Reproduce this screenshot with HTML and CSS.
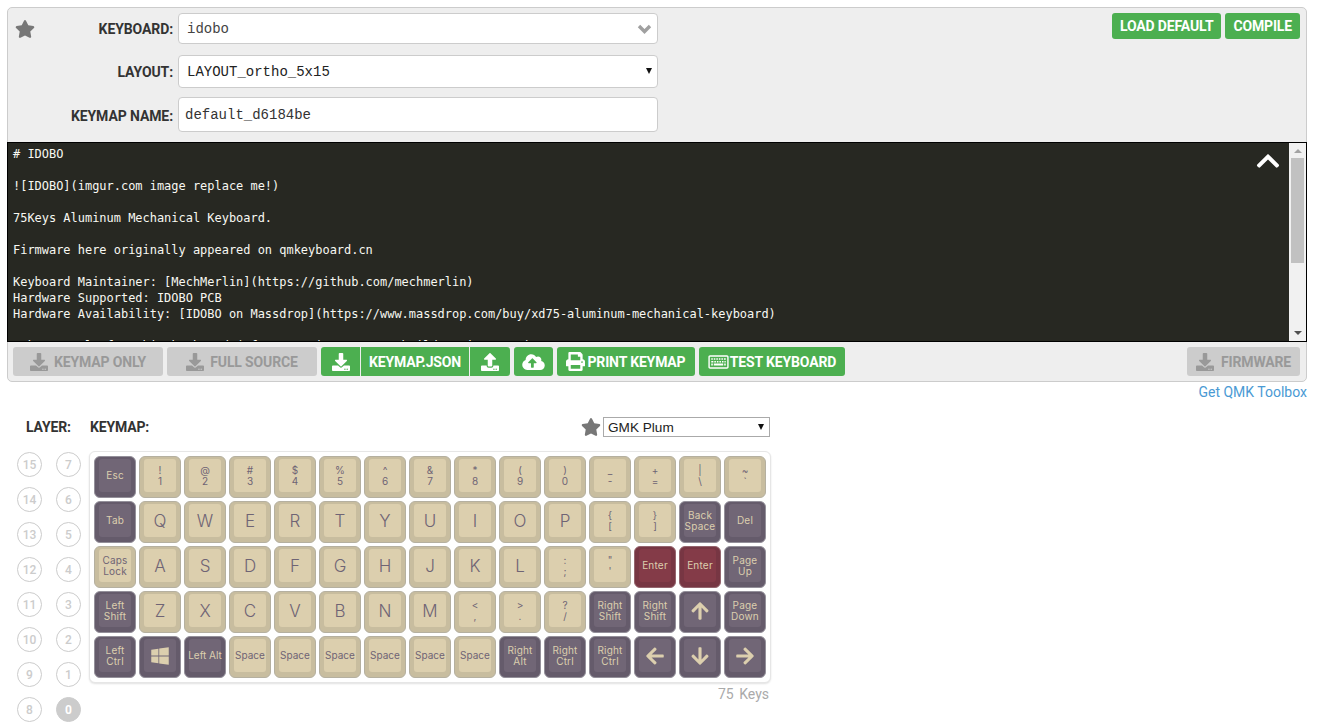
FILE: index.html
```html
<!DOCTYPE html>
<html lang="en">
<head>
    <meta charset="UTF-8">
    <meta name="viewport" content="width=device-width, initial-scale=1.0">
    <title>QMK Configurator</title>
    <link rel="stylesheet" href="styles.css">
</head>
<body>
    <svg class="sprites" xmlns="http://www.w3.org/2000/svg">
        <symbol id="i-star" viewBox="0 0 576 512"><path d="M259.3 17.8L194 150.2 47.9 171.5c-26.2 3.8-36.7 36.1-17.7 54.6l105.7 103-25 145.5c-4.5 26.3 23.2 46 46.4 33.7L288 439.6l130.7 68.7c23.2 12.2 50.9-7.4 46.4-33.7l-25-145.5 105.7-103c19-18.5 8.5-50.8-17.7-54.6L382 150.2 316.7 17.8c-11.7-23.6-45.6-23.9-57.4 0z"/></symbol>
        <symbol id="i-download" viewBox="0 0 512 512"><path d="M216 0h80c13.3 0 24 10.7 24 24v168h87.7c17.8 0 26.7 21.5 14.1 34.1L269.7 378.3c-7.5 7.5-19.8 7.5-27.3 0L90.1 226.1c-12.6-12.6-3.7-34.1 14.1-34.1H192V24c0-13.3 10.7-24 24-24zm296 376v112c0 13.3-10.7 24-24 24H24c-13.3 0-24-10.7-24-24V376c0-13.3 10.7-24 24-24h146.7l49 49c20.1 20.1 52.5 20.1 72.6 0l49-49H488c13.3 0 24 10.7 24 24zm-124 88c0-11-9-20-20-20s-20 9-20 20 9 20 20 20 20-9 20-20zm64 0c0-11-9-20-20-20s-20 9-20 20 9 20 20 20 20-9 20-20z"/></symbol>
        <symbol id="i-upload" viewBox="0 0 512 512"><path d="M296 384h-80c-13.3 0-24-10.7-24-24V192h-87.7c-17.8 0-26.7-21.5-14.1-34.1L242.3 5.7c7.5-7.5 19.8-7.5 27.3 0l152.2 152.2c12.6 12.6 3.7 34.1-14.1 34.1H320v168c0 13.3-10.7 24-24 24zm216-8v112c0 13.3-10.7 24-24 24H24c-13.3 0-24-10.7-24-24V376c0-13.3 10.7-24 24-24h136v8c0 30.9 25.1 56 56 56h80c30.9 0 56-25.1 56-56v-8h136c13.3 0 24 10.7 24 24zm-124 88c0-11-9-20-20-20s-20 9-20 20 9 20 20 20 20-9 20-20zm64 0c0-11-9-20-20-20s-20 9-20 20 9 20 20 20 20-9 20-20z"/></symbol>
        <symbol id="i-cloud" viewBox="0 0 640 512"><path d="M537.6 226.6c4.1-10.7 6.4-22.4 6.4-34.6 0-53-43-96-96-96-19.7 0-38.1 6-53.3 16.2C367 64.2 315.3 32 256 32c-88.4 0-160 71.6-160 160 0 2.7.1 5.4.2 8.1C40.2 219.8 0 273.2 0 336c0 79.5 64.5 144 144 144h368c70.7 0 128-57.3 128-128 0-61.9-44-113.6-102.4-125.4zM393.4 288H328v112c0 8.8-7.2 16-16 16h-48c-8.8 0-16-7.2-16-16V288h-65.4c-14.3 0-21.4-17.2-11.3-27.3l105.4-105.4c6.2-6.2 16.4-6.2 22.6 0l105.4 105.4c10.1 10.1 2.9 27.3-11.3 27.3z"/></symbol>
        <symbol id="i-print" viewBox="0 0 512 512"><path d="M448 192V77.25c0-8.49-3.37-16.62-9.37-22.63L393.37 9.37c-6-6-14.14-9.37-22.63-9.37H96C78.33 0 64 14.33 64 32v160c-35.35 0-64 28.65-64 64v112c0 8.84 7.16 16 16 16h48v96c0 17.67 14.33 32 32 32h320c17.67 0 32-14.33 32-32v-96h48c8.84 0 16-7.16 16-16V256c0-35.35-28.65-64-64-64zm-64 256H128v-96h256v96zm0-224H128V64h192v48c0 8.84 7.16 16 16 16h48v96zm48 72c-13.25 0-24-10.75-24-24 0-13.26 10.75-24 24-24s24 10.74 24 24c0 13.25-10.75 24-24 24z"/></symbol>
        <symbol id="i-keyboard" viewBox="0 0 576 512"><path fill-rule="evenodd" d="M528 64H48C21.5 64 0 85.5 0 112v288c0 26.5 21.5 48 48 48h480c26.5 0 48-21.5 48-48V112c0-26.5-21.5-48-48-48zm8 336c0 4.4-3.6 8-8 8H48c-4.4 0-8-3.6-8-8V112c0-4.4 3.6-8 8-8h480c4.4 0 8 3.6 8 8z"/><path d="M82 150h44v44H82zM154 150h44v44h-44zM226 150h44v44h-44zM298 150h44v44h-44zM370 150h44v44h-44zM442 150h52v44h-52zM82 226h60v44H82zM170 226h44v44h-44zM242 226h44v44h-44zM314 226h44v44h-44zM386 226h44v44h-44zM458 226h36v44h-36zM82 302h44v52H82zM154 302h268v52H154zM450 302h44v52h-44z"/></symbol>
        <symbol id="i-up" viewBox="0 0 448 512"><path d="M34.9 289.5l-22.2-22.2c-9.4-9.4-9.4-24.6 0-33.9L207 39c9.4-9.4 24.6-9.4 33.9 0l194.3 194.3c9.4 9.4 9.4 24.6 0 33.9L413 289.4c-9.5 9.5-25 9.3-34.3-.4L264 168.6V456c0 13.3-10.7 24-24 24h-32c-13.3 0-24-10.7-24-24V168.6L69.2 289.1c-9.3 9.8-24.8 10-34.3.4z"/></symbol>
        <symbol id="i-down" viewBox="0 0 448 512"><path d="M413.1 222.5l22.2 22.2c9.4 9.4 9.4 24.6 0 33.9L241 473c-9.4 9.4-24.6 9.4-33.9 0L12.7 278.6c-9.4-9.4-9.4-24.6 0-33.9l22.2-22.2c9.5-9.5 25-9.3 34.3.4L184 343.4V56c0-13.3 10.7-24 24-24h32c13.3 0 24 10.7 24 24v287.4l114.8-120.5c9.3-9.8 24.8-10 34.3-.4z"/></symbol>
        <symbol id="i-left" viewBox="0 0 448 512"><path d="M257.5 445.1l-22.2 22.2c-9.4 9.4-24.6 9.4-33.9 0L7 273c-9.4-9.4-9.4-24.6 0-33.9L201.4 44.7c9.4-9.4 24.6-9.4 33.9 0l22.2 22.2c9.5 9.5 9.3 25-.4 34.3L136.6 216H424c13.3 0 24 10.7 24 24v32c0 13.3-10.7 24-24 24H136.6l120.5 114.8c9.8 9.3 10 24.8.4 34.3z"/></symbol>
        <symbol id="i-right" viewBox="0 0 448 512"><path d="M190.5 66.9l22.2-22.2c9.4-9.4 24.6-9.4 33.9 0L441 239c9.4 9.4 9.4 24.6 0 33.9L246.6 467.3c-9.4 9.4-24.6 9.4-33.9 0l-22.2-22.2c-9.5-9.5-9.3-25 .4-34.3L311.4 296H24c-13.3 0-24-10.7-24-24v-32c0-13.3 10.7-24 24-24h287.4L190.9 101.2c-9.8-9.3-10-24.8-.4-34.3z"/></symbol>
        <symbol id="i-windows" viewBox="0 0 448 512"><path d="M0 93.7l183.6-25.3v177.4H0V93.7zm0 324.6l183.6 25.3V268.4H0v149.9zm203.8 28L448 480V268.4H203.8v177.9zm0-380.6v180.1H448V32L203.8 65.7z"/></symbol>
        <symbol id="i-chev-up" viewBox="0 0 448 512"><path d="M240.971 130.524l194.343 194.343c9.373 9.373 9.373 24.569 0 33.941l-22.667 22.667c-9.357 9.357-24.522 9.375-33.901.04L224 227.495 69.255 381.516c-9.379 9.335-24.544 9.317-33.901-.04l-22.667-22.667c-9.373-9.373-9.373-24.569 0-33.941L207.03 130.525c9.372-9.373 24.568-9.373 33.941-.001z"/></symbol>
    </svg>

    <div class="page">
        <section class="panel">
            <div class="top-bar">
                <svg class="fav-star"><use href="#i-star"/></svg>
                <div class="form-grid">
                    <label class="field-label">KEYBOARD:</label>
                    <div class="field field-keyboard">
                        <span>idobo</span>
                        <svg class="chev" viewBox="0 0 15 10"><polyline points="2,2 7.5,7.5 13,2"/></svg>
                    </div>
                    <label class="field-label label-layout" for="layout">LAYOUT:</label>
                    <div class="select-wrap select-layout">
                        <select class="field field-layout" id="layout">
                            <option>LAYOUT_ortho_5x15</option>
                        </select>
                    </div>
                    <label class="field-label label-name" for="keymap-name">KEYMAP NAME:</label>
                    <input class="field field-name" id="keymap-name" type="text" value="default_d6184be">
                </div>
                <div class="top-actions">
                    <button class="btn btn-top">LOAD DEFAULT</button>
                    <button class="btn btn-top">COMPILE</button>
                </div>
            </div>

            <div class="editor">
                <pre class="editor-text"># IDOBO

![IDOBO](imgur.com image replace me!)

75Keys Aluminum Mechanical Keyboard.

Firmware here originally appeared on qmkeyboard.cn

Keyboard Maintainer: [MechMerlin](https://github.com/mechmerlin)
Hardware Supported: IDOBO PCB
Hardware Availability: [IDOBO on Massdrop](https://www.massdrop.com/buy/xd75-aluminum-mechanical-keyboard)

Make example for this keyboard (after setting up your build environment):</pre>
                <svg class="collapse"><use href="#i-chev-up"/></svg>
                <div class="scrollbar">
                    <span class="arrow-up"></span>
                    <span class="thumb"></span>
                    <span class="arrow-down"></span>
                </div>
            </div>

            <div class="action-bar">
                <button class="btn btn-off btn-wide"><svg class="ico"><use href="#i-download"/></svg>KEYMAP ONLY</button>
                <button class="btn btn-off btn-wide"><svg class="ico"><use href="#i-download"/></svg>FULL SOURCE</button>
                <div class="btn-group">
                    <button class="btn btn-icon"><svg class="ico"><use href="#i-download"/></svg></button>
                    <button class="btn btn-json">KEYMAP.JSON</button>
                    <button class="btn btn-icon"><svg class="ico"><use href="#i-upload"/></svg></button>
                </div>
                <button class="btn btn-cloud"><svg class="ico ico-cloud"><use href="#i-cloud"/></svg></button>
                <button class="btn btn-print"><svg class="ico ico-print"><use href="#i-print"/></svg>PRINT KEYMAP</button>
                <button class="btn btn-test"><svg class="ico ico-kb"><use href="#i-keyboard"/></svg>TEST KEYBOARD</button>
                <button class="btn btn-off btn-firmware"><svg class="ico"><use href="#i-download"/></svg>FIRMWARE</button>
            </div>
        </section>

        <div class="toolbox-row"><a href="#">Get QMK Toolbox</a></div>

        <section class="workspace">
            <div class="layers">
                <div class="section-label layer-label">LAYER:</div>
                <div class="layer-grid">
                    <span class="layer">15</span><span class="layer">7</span>
                    <span class="layer">14</span><span class="layer">6</span>
                    <span class="layer">13</span><span class="layer">5</span>
                    <span class="layer">12</span><span class="layer">4</span>
                    <span class="layer">11</span><span class="layer">3</span>
                    <span class="layer">10</span><span class="layer">2</span>
                    <span class="layer">9</span><span class="layer">1</span>
                    <span class="layer">8</span><span class="layer layer-active">0</span>
                </div>
            </div>

            <div class="keymap">
                <div class="keymap-head">
                    <div class="section-label">KEYMAP:</div>
                    <div class="colorway">
                        <svg class="colorway-star"><use href="#i-star"/></svg>
                        <div class="select-wrap select-colorway">
                            <select class="colorway-select"><option>GMK Plum</option></select>
                        </div>
                    </div>
                </div>

                <div class="board">
                    <!-- row 1 -->
                    <div class="key dark"><div class="cap cap-sm">Esc</div></div>
                    <div class="key"><div class="cap cap-two">!<br>1</div></div>
                    <div class="key"><div class="cap cap-two">@<br>2</div></div>
                    <div class="key"><div class="cap cap-two">#<br>3</div></div>
                    <div class="key"><div class="cap cap-two">$<br>4</div></div>
                    <div class="key"><div class="cap cap-two">%<br>5</div></div>
                    <div class="key"><div class="cap cap-two">^<br>6</div></div>
                    <div class="key"><div class="cap cap-two">&amp;<br>7</div></div>
                    <div class="key"><div class="cap cap-two">*<br>8</div></div>
                    <div class="key"><div class="cap cap-two">(<br>9</div></div>
                    <div class="key"><div class="cap cap-two">)<br>0</div></div>
                    <div class="key"><div class="cap cap-two">_<br>-</div></div>
                    <div class="key"><div class="cap cap-two">+<br>=</div></div>
                    <div class="key"><div class="cap cap-two">|<br>\</div></div>
                    <div class="key"><div class="cap cap-two">~<br>`</div></div>
                    <!-- row 2 -->
                    <div class="key dark"><div class="cap cap-sm">Tab</div></div>
                    <div class="key"><div class="cap cap-lg">Q</div></div>
                    <div class="key"><div class="cap cap-lg">W</div></div>
                    <div class="key"><div class="cap cap-lg">E</div></div>
                    <div class="key"><div class="cap cap-lg">R</div></div>
                    <div class="key"><div class="cap cap-lg">T</div></div>
                    <div class="key"><div class="cap cap-lg">Y</div></div>
                    <div class="key"><div class="cap cap-lg">U</div></div>
                    <div class="key"><div class="cap cap-lg">I</div></div>
                    <div class="key"><div class="cap cap-lg">O</div></div>
                    <div class="key"><div class="cap cap-lg">P</div></div>
                    <div class="key"><div class="cap cap-two">{<br>[</div></div>
                    <div class="key"><div class="cap cap-two">}<br>]</div></div>
                    <div class="key dark"><div class="cap cap-sm">Back<br>Space</div></div>
                    <div class="key dark"><div class="cap cap-sm">Del</div></div>
                    <!-- row 3 -->
                    <div class="key"><div class="cap cap-sm">Caps<br>Lock</div></div>
                    <div class="key"><div class="cap cap-lg">A</div></div>
                    <div class="key"><div class="cap cap-lg">S</div></div>
                    <div class="key"><div class="cap cap-lg">D</div></div>
                    <div class="key"><div class="cap cap-lg">F</div></div>
                    <div class="key"><div class="cap cap-lg">G</div></div>
                    <div class="key"><div class="cap cap-lg">H</div></div>
                    <div class="key"><div class="cap cap-lg">J</div></div>
                    <div class="key"><div class="cap cap-lg">K</div></div>
                    <div class="key"><div class="cap cap-lg">L</div></div>
                    <div class="key"><div class="cap cap-two">:<br>;</div></div>
                    <div class="key"><div class="cap cap-two">"<br>'</div></div>
                    <div class="key red"><div class="cap cap-sm">Enter</div></div>
                    <div class="key red"><div class="cap cap-sm">Enter</div></div>
                    <div class="key dark"><div class="cap cap-sm">Page<br>Up</div></div>
                    <!-- row 4 -->
                    <div class="key dark"><div class="cap cap-sm">Left<br>Shift</div></div>
                    <div class="key"><div class="cap cap-lg">Z</div></div>
                    <div class="key"><div class="cap cap-lg">X</div></div>
                    <div class="key"><div class="cap cap-lg">C</div></div>
                    <div class="key"><div class="cap cap-lg">V</div></div>
                    <div class="key"><div class="cap cap-lg">B</div></div>
                    <div class="key"><div class="cap cap-lg">N</div></div>
                    <div class="key"><div class="cap cap-lg">M</div></div>
                    <div class="key"><div class="cap cap-two">&lt;<br>,</div></div>
                    <div class="key"><div class="cap cap-two">&gt;<br>.</div></div>
                    <div class="key"><div class="cap cap-two">?<br>/</div></div>
                    <div class="key dark"><div class="cap cap-sm">Right<br>Shift</div></div>
                    <div class="key dark"><div class="cap cap-sm">Right<br>Shift</div></div>
                    <div class="key dark"><div class="cap"><svg class="arrow"><use href="#i-up"/></svg></div></div>
                    <div class="key dark"><div class="cap cap-sm">Page<br>Down</div></div>
                    <!-- row 5 -->
                    <div class="key dark"><div class="cap cap-sm">Left<br>Ctrl</div></div>
                    <div class="key dark"><div class="cap"><svg class="arrow"><use href="#i-windows"/></svg></div></div>
                    <div class="key dark"><div class="cap cap-sm cap-tight">Left Alt</div></div>
                    <div class="key"><div class="cap cap-sm cap-tight">Space</div></div>
                    <div class="key"><div class="cap cap-sm cap-tight">Space</div></div>
                    <div class="key"><div class="cap cap-sm cap-tight">Space</div></div>
                    <div class="key"><div class="cap cap-sm cap-tight">Space</div></div>
                    <div class="key"><div class="cap cap-sm cap-tight">Space</div></div>
                    <div class="key"><div class="cap cap-sm cap-tight">Space</div></div>
                    <div class="key dark"><div class="cap cap-sm">Right<br>Alt</div></div>
                    <div class="key dark"><div class="cap cap-sm">Right<br>Ctrl</div></div>
                    <div class="key dark"><div class="cap cap-sm">Right<br>Ctrl</div></div>
                    <div class="key dark"><div class="cap"><svg class="arrow"><use href="#i-left"/></svg></div></div>
                    <div class="key dark"><div class="cap"><svg class="arrow"><use href="#i-down"/></svg></div></div>
                    <div class="key dark"><div class="cap"><svg class="arrow"><use href="#i-right"/></svg></div></div>
                </div>
                <div class="key-count">75 Keys</div>
            </div>
        </section>
    </div>
</body>
</html>
```

FILE: styles.css
```css
* {
    margin: 0;
    padding: 0;
    box-sizing: border-box;
}

body {
    font-family: Roboto, sans-serif;
    font-size: 14px;
    color: #333;
    background: #fff;
    overflow: hidden;
}

.sprites {
    display: none;
}

.page {
    padding: 7px 11px 0 7px;
}

/* top panel */
.panel {
    height: 375px;
    background: #eee;
    border: 1px solid #ccc;
    border-radius: 5px;
}

.top-bar {
    display: flex;
    height: 134px;
}

.fav-star {
    width: 20px;
    height: 18px;
    margin: 12px 0 0 7px;
    fill: #777;
    flex: none;
}

.form-grid {
    display: grid;
    grid-template-columns: 138px 480px;
    grid-template-rows: 31px 33px 35px;
    column-gap: 5px;
    row-gap: 11px;
    align-content: start;
    margin-top: 5px;
}

.label-name,
.field-name {
    margin-top: -2px;
}

.field-label {
    display: flex;
    align-items: center;
    justify-content: flex-end;
    font-weight: 700;
    color: #333;
    letter-spacing: -0.1px;
}

.field {
    font-family: "Liberation Mono", monospace;
    font-size: 14px;
    color: #333;
    background: #fff;
    border: 1px solid #ccc;
    border-radius: 4px;
    width: 480px;
}

.field-keyboard {
    display: flex;
    align-items: center;
    justify-content: space-between;
    padding: 0 5px 0 8px;
    color: #444;
}

.chev {
    width: 15px;
    height: 10px;
    margin-top: 1px;
    fill: none;
    stroke: #a0a0a0;
    stroke-width: 3.4;
}

.select-wrap {
    position: relative;
}

/* little black triangle of the native select */
.select-wrap::after {
    content: "";
    position: absolute;
    width: 0;
    height: 0;
    border-left: 3.5px solid transparent;
    border-right: 3.5px solid transparent;
    border-top: 6px solid #111;
    pointer-events: none;
}

.select-layout::after {
    top: 13px;
    right: 6px;
}

.select-colorway::after {
    top: 7px;
    right: 6px;
}

.field-layout {
    appearance: none;
    height: 33px;
    padding-left: 8px;
    color: #222;
}

.field-name {
    padding: 0 0 0 6px;
    outline: none;
    height: 35px;
    line-height: 22px;
}

.top-actions {
    display: flex;
    gap: 4px;
    margin: 5px 0 0 auto;
    padding-right: 6px;
    align-items: flex-start;
}

/* buttons */
.btn {
    display: inline-flex;
    align-items: center;
    justify-content: center;
    height: 29px;
    border: none;
    border-radius: 3px;
    background: #4caf50;
    color: #fff;
    font-family: Roboto, sans-serif;
    font-size: 14px;
    font-weight: 700;
    letter-spacing: -0.15px;
    white-space: nowrap;
}

.btn-top {
    height: 26px;
    padding: 0 8px;
}

.btn-off {
    background: #ccc;
    color: #999;
}

.ico {
    width: 18px;
    height: 18px;
    fill: currentColor;
    flex: none;
}

.btn-wide {
    width: 150px;
    gap: 6px;
}

.btn-group {
    display: flex;
    gap: 1px;
}

.btn-group .btn {
    border-radius: 0;
}

.btn-group .btn:first-child {
    border-radius: 3px 0 0 3px;
    width: 39px;
}

.btn-group .btn:last-child {
    border-radius: 0 3px 3px 0;
    width: 40px;
}

.btn-json {
    width: 108px;
}

.btn-cloud {
    width: 39px;
}

.ico-cloud {
    width: 23px;
}

.btn-print {
    width: 138px;
    gap: 2px;
}

.ico-print {
    width: 19px;
    height: 19px;
}

.btn-test {
    width: 146px;
    gap: 1px;
}

.ico-kb {
    width: 21px;
}

.btn-firmware {
    width: 113px;
    gap: 7px;
    margin-left: auto;
}

.action-bar {
    display: flex;
    gap: 4px;
    padding: 5px 6px 0 5px;
}

/* readme box */
.editor {
    position: relative;
    display: flex;
    height: 200px;
    margin: 0 -1px;
    background: #272822;
    border: 1px solid #000;
    overflow: hidden;
}

.editor-text {
    flex: 1;
    padding: 3px 0 0 5px;
    font-family: "DejaVu Sans Mono", monospace;
    font-size: 11.96px;
    line-height: 16px;
    color: #f8f8f2;
    overflow: hidden;
}

.collapse {
    position: absolute;
    top: 5px;
    right: 26px;
    width: 24px;
    height: 26px;
    fill: #fff;
}

.scrollbar {
    display: flex;
    flex-direction: column;
    align-items: center;
    width: 17px;
    flex: none;
    background: #f1f1f1;
}

.thumb {
    width: 13px;
    height: 105px;
    margin: 5px 0 auto;
    background: #c1c1c1;
}

.arrow-up,
.arrow-down {
    width: 0;
    height: 0;
    margin-top: 6px;
    border-left: 4px solid transparent;
    border-right: 4px solid transparent;
}

.arrow-up {
    border-bottom: 4px solid #a3a3a3;
}

.arrow-down {
    margin: 0 0 6px;
    border-top: 4px solid #505050;
}

.toolbox-row {
    height: 35px;
    padding-top: 2px;
    text-align: right;
    line-height: 16px;
}

.toolbox-row a {
    color: #4a9ad4;
    text-decoration: none;
}

/* layers + keyboard */
.workspace {
    display: flex;
}

.layers {
    width: 82px;
    flex: none;
    padding-left: 10px;
}

.section-label {
    font-weight: 700;
    letter-spacing: -0.15px;
    line-height: 20px;
    color: #333;
}

.layer-label {
    padding-left: 9px;
    height: 35px;
}

.layer-grid {
    display: grid;
    grid-template-columns: 25px 25px;
    grid-auto-rows: 25px;
    column-gap: 14px;
    row-gap: 10px;
}

.layer {
    display: flex;
    align-items: center;
    justify-content: center;
    border: 1px solid #ccc;
    border-radius: 50%;
    color: #ccc;
    font-size: 12px;
    font-weight: 500;
}

.layer-active {
    background: #ccc;
    color: #fff;
    font-weight: 700;
}

.keymap {
    width: 682px;
    flex: none;
}

.keymap-head {
    display: flex;
    justify-content: space-between;
    height: 34px;
    padding: 0 1px;
}

.colorway {
    display: flex;
    align-items: flex-start;
    gap: 2px;
}

.colorway-star {
    width: 20px;
    height: 20px;
    fill: #777;
}

.colorway-select {
    appearance: none;
    display: block;
    width: 167px;
    height: 20px;
    padding-left: 4px;
    font-family: "Liberation Sans", sans-serif;
    font-size: 13.6px;
    color: #222;
    background: #fff;
    border: 1px solid #aaa;
}

.board {
    display: grid;
    grid-template-columns: repeat(15, 42px);
    grid-auto-rows: 42px;
    gap: 3px;
    padding: 4px;
    background: #fff;
    border: 1px solid #e6e6e6;
    border-radius: 6px;
    box-shadow: 0 1px 2px rgba(0, 0, 0, 0.12);
}

.key {
    display: flex;
    padding: 2px 4px 5px;
    background: #c8bd9f;
    border: 1px solid #b5b0a0;
    border-radius: 6px;
    color: #6f6475;
}

.key.dark {
    background: #655b6b;
    border-color: #94909a;
    color: #dccfae;
}

.key.red {
    background: #773643;
    border-color: #94656e;
    color: #dccfae;
}

.cap {
    flex: 1;
    display: flex;
    align-items: center;
    justify-content: center;
    text-align: center;
    border-radius: 3px;
    background: #dccfae;
    font-family: Inter, sans-serif;
    font-weight: 400;
    min-width: 0;
}

.key.dark .cap {
    background: #716676;
}

.key.red .cap {
    background: #843b48;
}

.cap-sm {
    font-size: 10px;
    line-height: 11px;
    letter-spacing: 0.2px;
}

.cap-tight {
    letter-spacing: 0;
    white-space: nowrap;
}

.cap-lg {
    font-size: 17px;
    font-weight: 300;
}

.cap-two {
    font-size: 10px;
    line-height: 11px;
}

.arrow {
    width: 18px;
    height: 20px;
    fill: #dccfae;
}

.key-count {
    margin-top: 3px;
    padding-right: 2px;
    text-align: right;
    color: #aaa;
    word-spacing: 2px;
}
```
